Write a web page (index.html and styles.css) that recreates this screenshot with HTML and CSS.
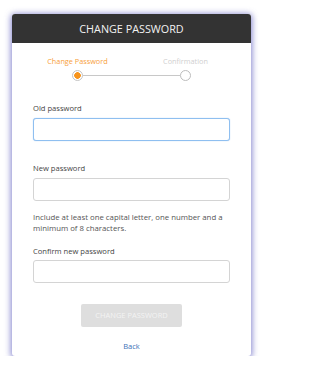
FILE: index.html
```html
<!DOCTYPE html>
<html lang="en">
<head>
<meta charset="utf-8">
<title>Change password</title>
<link rel="stylesheet" href="styles.css">
</head>
<body>
<div class="page">
  <div class="card">
    <div class="card-header">CHANGE PASSWORD</div>
    <div class="stepper">
      <div class="step-labels">
        <span class="step-label active">Change Password</span>
        <span class="step-label">Confirmation</span>
      </div>
      <div class="step-track">
        <span class="step-dot active"></span>
        <span class="step-line"></span>
        <span class="step-dot"></span>
      </div>
    </div>
    <form class="form">
      <div class="field">
        <label class="field-label" for="old">Old password</label>
        <input class="field-input focused" id="old" type="password">
      </div>
      <div class="field">
        <label class="field-label" for="new">New password</label>
        <input class="field-input" id="new" type="password">
      </div>
      <p class="hint">Include at least one capital letter, one number and a minimum of 8 characters.</p>
      <div class="field">
        <label class="field-label" for="confirm">Confirm new password</label>
        <input class="field-input" id="confirm" type="password">
      </div>
      <div class="actions">
        <button class="submit" type="button" disabled>CHANGE PASSWORD</button>
        <a class="back" href="#">Back</a>
      </div>
    </form>
  </div>
</div>
</body>
</html>
```

FILE: styles.css
```css
html, body {
  margin: 0;
  padding: 0;
  background: #ffffff;
}

body {
  font-family: "Open Sans", "Noto Sans", sans-serif;
  color: #444444;
}

.page {
  padding: 14px 11px 0 12px;
}

.card {
  width: 239px;
  height: 342px;
  background: #ffffff;
  border-radius: 3px;
  overflow: hidden;
  box-shadow: 0 1px 6px 1px rgba(90, 90, 190, 0.75);
}

.card-header {
  height: 29px;
  line-height: 29px;
  background: #333333;
  color: #f2f2f2;
  text-align: center;
  font-size: 10.8px;
}

.stepper {
  padding-top: 13px;
}

.step-labels {
  display: grid;
  grid-template-columns: 80px 80px;
  column-gap: 28px;
  justify-content: center;
}

.step-label {
  text-align: center;
  font-size: 7.3px;
  line-height: 11px;
  color: #cfcfcf;
}

.step-label.active {
  color: #f7a03a;
}

.step-track {
  display: flex;
  align-items: center;
  justify-content: center;
  margin-top: 3px;
}

.step-dot {
  box-sizing: border-box;
  width: 11px;
  height: 11px;
  border-radius: 50%;
  border: 1px solid #bdbdbd;
  background: #ffffff;
}

.step-dot.active {
  border-color: #c4c4c4;
  background: radial-gradient(circle, #f7941d 0, #f7941d 3px, #ffffff 3.6px);
}

.step-line {
  width: 97px;
  height: 1px;
  background: #c8c8c8;
}

.form {
  padding: 22px 21px 0 21px;
}

.field-label {
  display: block;
  font-size: 7.6px;
  line-height: 11px;
  color: #444444;
  margin-bottom: 3.5px;
}

.field-input {
  display: block;
  box-sizing: border-box;
  width: 197px;
  height: 23px;
  margin: 0 0 22.5px 0;
  border: 1px solid #d4d4d4;
  border-radius: 3px;
  background: #ffffff;
  padding: 0 6px;
  outline: none;
}

.field-input.focused {
  border-color: #8fbff0;
  box-shadow: 0 0 1px 0 #8fbff0;
}

.hint {
  margin: -11.5px 0 11px 0;
  font-size: 7.8px;
  line-height: 11.5px;
  color: #555555;
}

.actions {
  display: flex;
  flex-direction: column;
  align-items: center;
  margin-top: -2px;
}

.submit {
  width: 101px;
  height: 23px;
  border: none;
  border-radius: 2px;
  background: #dedede;
  color: #f3f3f3;
  font-family: "Open Sans", "Noto Sans", sans-serif;
  font-size: 7.5px;
  padding: 0;
}

.back {
  margin-top: 14.5px;
  font-size: 7.5px;
  line-height: 11px;
  color: #3d72b8;
  text-decoration: none;
}
```
